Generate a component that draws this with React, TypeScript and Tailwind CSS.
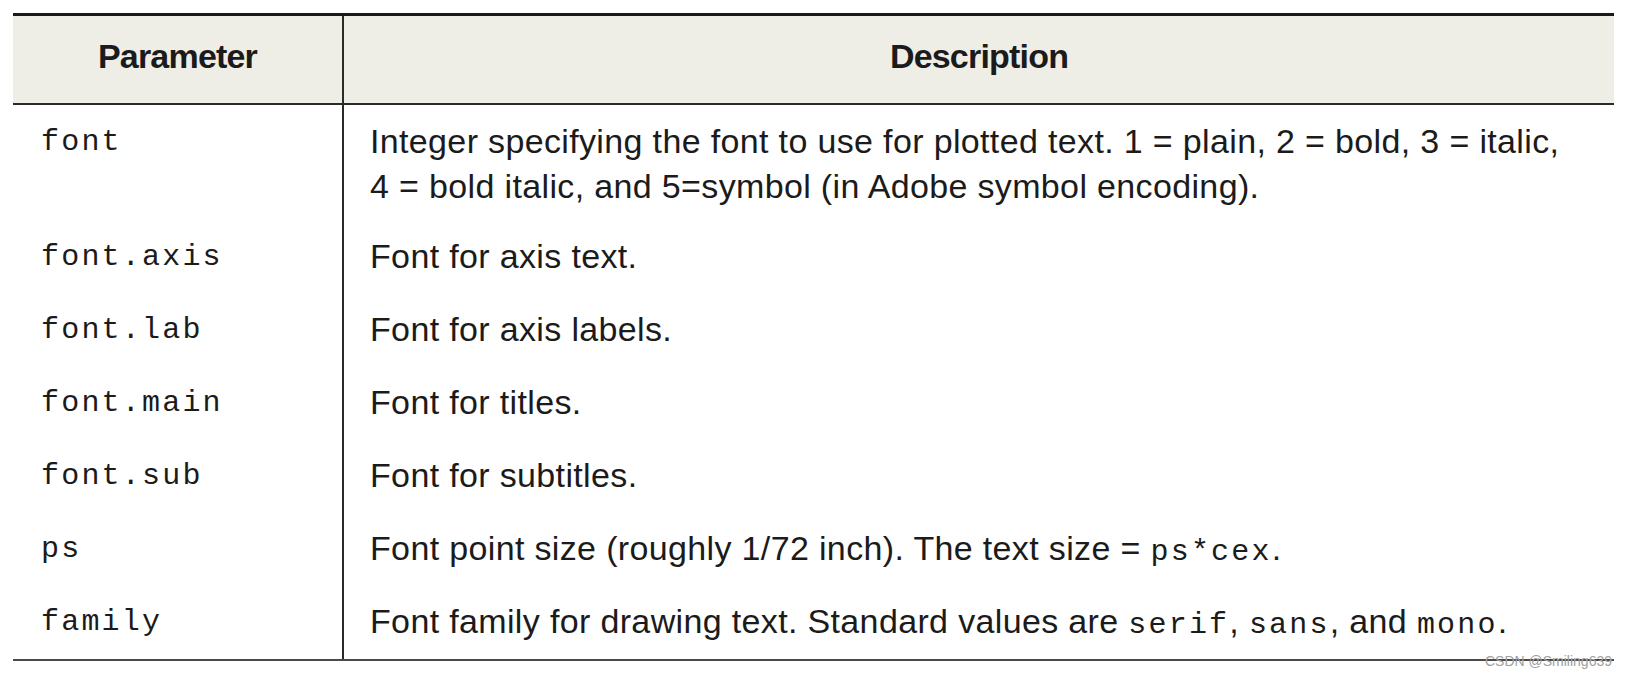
const rows: { name: string; desc: React.ReactNode }[] = [
  {
    name: 'font',
    desc: (
      <>
        Integer specifying the font to use for plotted text. 1 = plain, 2 = bold, 3 = italic,
        <br />
        4 = bold italic, and 5=symbol (in Adobe symbol encoding).
      </>
    ),
  },
  { name: 'font.axis', desc: 'Font for axis text.' },
  { name: 'font.lab', desc: 'Font for axis labels.' },
  { name: 'font.main', desc: 'Font for titles.' },
  { name: 'font.sub', desc: 'Font for subtitles.' },
  {
    name: 'ps',
    desc: (
      <>
        Font point size (roughly 1/72 inch). The text size = <Code>ps*cex</Code>.
      </>
    ),
  },
  {
    name: 'family',
    desc: (
      <>
        Font family for drawing text. Standard values are <Code>serif</Code>, <Code>sans</Code>, and <Code>mono</Code>.
      </>
    ),
  },
];

function Code({ children }: { children: React.ReactNode }) {
  return (
    <span className="font-['Liberation_Mono',monospace] text-[30px] leading-none tracking-[2.2px]">{children}</span>
  );
}

export default function App() {
  return (
    <div className="relative w-[1630px] h-[678px] bg-white pl-[13px] pt-[13px] text-[#1b1b1b] font-['Liberation_Sans',Arial,sans-serif]">
      <div className="w-[1601px] border-t-[3px] border-[#1a1a1a]">
        {/* header */}
        <div className="grid grid-cols-[331px_1fr] h-[89px] bg-[#efeee6] border-b-2 border-[#2a2a2a]">
          <div className="flex items-center justify-center border-r-2 border-[#2a2a2a] text-[34px] font-bold tracking-[-0.8px] pb-[6px]">
            Parameter
          </div>
          <div className="flex items-center justify-center text-[34px] font-bold tracking-[-0.8px] pb-[6px]">
            Description
          </div>
        </div>

        {/* body */}
        <div className="grid grid-cols-[331px_1fr] border-b-2 border-[#4a4a4a]">
          {rows.map((r, i) => (
            <div key={r.name} className="contents">
              <div
                className={`border-r-2 border-[#2a2a2a] pl-[28px] leading-[45px] font-['Liberation_Mono',monospace] text-[30px] tracking-[2.2px] ${
                  i === 0 ? 'pt-[15px] pb-[11px]' : 'pt-[14px] pb-[14px]'
                }`}
              >
                {r.name}
              </div>
              <div
                className={`pl-[26px] leading-[45px] text-[34px] tracking-[0.35px] ${
                  i === 0 ? 'pt-[14px] pb-[12px]' : 'pt-[13px] pb-[15px]'
                }`}
              >
                {r.desc}
              </div>
            </div>
          ))}
        </div>
      </div>
      <span className="absolute right-[18px] top-[653px] text-[14px] leading-[16px] text-[#a0a0a0] font-['Liberation_Sans',Arial,sans-serif]">
        CSDN @Smiling639
      </span>
    </div>
  );
}
